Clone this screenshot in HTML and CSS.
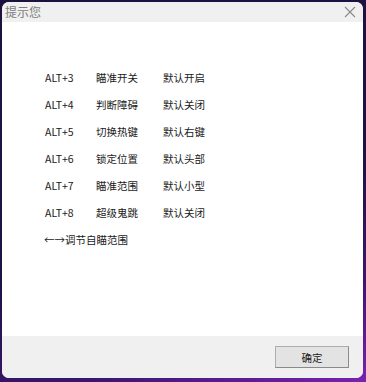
FILE: index.html
```html
<!DOCTYPE html>
<html lang="zh-CN">
<head>
  <meta charset="UTF-8" />
  <title>提示您</title>
  <link rel="stylesheet" href="styles.css">
</head>
<body>
  <div class="dialog">
    <div class="titlebar">
      <span class="title">提示您</span>
      <svg class="close" width="12" height="12" viewBox="0 0 12 12">
        <path d="M1 1 L11 11 M11 1 L1 11" stroke="#8a8a8a" stroke-width="1.1" fill="none"/>
      </svg>
    </div>

    <div class="content">
      <div class="keys">
        <span>ALT+3</span><span>瞄准开关</span><span>默认开启</span>
        <span>ALT+4</span><span>判断障碍</span><span>默认关闭</span>
        <span>ALT+5</span><span>切换热键</span><span>默认右键</span>
        <span>ALT+6</span><span>锁定位置</span><span>默认头部</span>
        <span>ALT+7</span><span>瞄准范围</span><span>默认小型</span>
        <span>ALT+8</span><span>超级鬼跳</span><span>默认关闭</span>
      </div>
      <div class="hint">←→调节自瞄范围</div>
    </div>

    <div class="footer">
      <button class="ok">确定</button>
    </div>
  </div>
</body>
</html>
```

FILE: styles.css
```css
html, body {
  margin: 0;
  height: 100%;
}

body {
  background: linear-gradient(160deg, #1c1240 0%, #1e1244 55%, #3a1670 80%, #7a22b0 100%);
  font-family: "Noto Sans CJK SC", "Noto Sans", sans-serif;
  padding: 2px 3px 4px 2px;
  box-sizing: border-box;
}

.dialog {
  height: 376px;
  width: 361px;
  display: flex;
  flex-direction: column;
  background: #fff;
  border-radius: 7px;
  overflow: hidden;
}

.titlebar {
  height: 20px;
  background: #f0f0f0;
  display: flex;
  align-items: center;
  justify-content: space-between;
  padding: 0 7px 0 3px;
}

.title {
  font-size: 12px;
  color: #7c7c7c;
  line-height: 20px;
}

.close {
  margin-top: -1px;
}

.content {
  flex: 1;
  padding: 42px 0 0 43px;
  font-size: 10.5px;
  color: #1a1a1a;
}

.keys {
  display: grid;
  grid-template-columns: 51px 67px auto;
  grid-auto-rows: 27px;
  align-items: center;
}

.hint {
  margin-left: -1px;
  height: 27px;
  line-height: 27px;
}

.footer {
  height: 42px;
  background: #f0f0f0;
  display: flex;
  justify-content: flex-end;
  align-items: flex-start;
  padding: 10px 14px 0 0;
  box-sizing: border-box;
}

.ok {
  width: 74px;
  height: 22px;
  background: #e3e3e3;
  border: 1px solid #adadad;
  border-right-color: #8a8a8a;
  border-bottom-color: #8a8a8a;
  font-family: "Noto Sans CJK SC", sans-serif;
  font-size: 10.5px;
  color: #1a1a1a;
  padding: 0;
}
```
